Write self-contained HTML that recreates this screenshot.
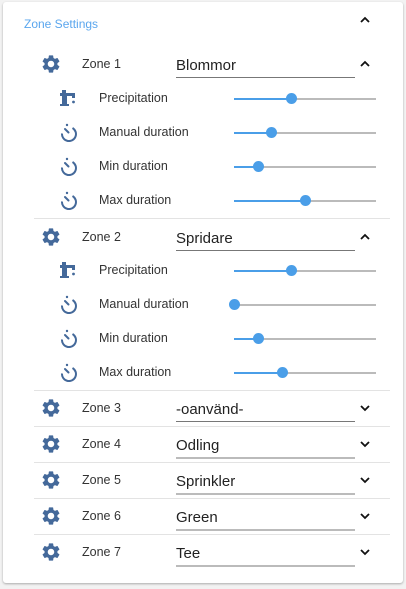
<!DOCTYPE html>
<html><head><style>
body{margin:0;width:406px;height:589px;background:#f2f2f2;font-family:"Liberation Sans",sans-serif;position:relative;overflow:hidden}
.card{position:absolute;left:3px;top:2px;width:400px;height:581px;background:#fff;border-radius:3px;box-shadow:0 1px 2px rgba(0,0,0,.3)}
.a{position:absolute}
.title{left:24px;top:17px;font-size:12px;color:#5aa6ee}
.zl{font-size:12.5px;color:#333}
.in{font-size:15px;color:#222;width:179px;height:20px;border-bottom:1px solid #777}
.in.g{border-bottom:2px solid #bbb}
.lab{font-size:12.5px;color:#333}
.track{height:2px;background:#bbb;width:142px;left:234px}
.fill{height:2px;background:#4a9ee8;left:0;top:0}
.th{width:11px;height:11px;border-radius:50%;background:#4a9ee8;top:-5px}
.div{left:34px;width:356px;height:1px;background:#e3e3e3}
</style></head><body>
<div class="card"></div>
<div class="a title">Zone Settings</div>
<svg class="a" style="left:359px;top:15px" width="12" height="10"><path d="M2 7 L6 3 L10 7" stroke="#111" stroke-width="1.8" fill="none"/></svg>
<svg width="0" height="0" style="position:absolute">
<defs>
<g id="gear"><path fill="#44699a" d="M19.14,12.94c.04-.3.06-.61.06-.94s-.02-.64-.07-.94l2.03-1.58c.18-.14.23-.41.12-.61l-1.92-3.320c-.12-.22-.37-.29-.59-.22l-2.39.96c-.5-.38-1.03-.7-1.62-.94L14.4,2.81c-.04-.24-.24-.41-.48-.41h-3.84c-.24,0-.43.17-.47.41L9.25,5.35C8.66,5.59,8.12,5.920,7.63,6.29L5.24,5.33c-.22-.08-.47,0-.59.22L2.74,8.87C2.62,9.08,2.66,9.34,2.86,9.48l2.03,1.58C4.84,11.36,4.8,11.69,4.8,12s.02.64.07.94l-2.03,1.58c-.18.14-.23.41-.12.61l1.92,3.32c.12.22.37.29.59.22l2.39-.96c.5.38,1.03.7,1.62.94l.36,2.54c.05.24.24.41.48.41h3.84c.24,0,.44-.17.47-.41l.36-2.54c.59-.24,1.13-.56,1.62-.94l2.39.96c.22.08.47,0,.59-.22l1.92-3.32c.12-.22.07-.47-.12-.61L19.14,12.94zM12,15.6c-1.98,0-3.6-1.62-3.6-3.6s1.62-3.6,3.6-3.6,3.6,1.62,3.6,3.6S13.98,15.6,12,15.6z"/></g>
<g id="tap"><path fill="#44699a" d="M5 3h4v3h9v5h-3V9H10v8h2v2H3v-2h2V9H3V6h2z"/><circle cx="16.5" cy="15" r="1.4" fill="#44699a"/></g>
<g id="tim" fill="none" stroke="#44699a" stroke-width="2"><path d="M15.5 7 A7 7 0 1 1 5 12.5"/><path d="M8 8 L11.5 11.5" stroke-linecap="round"/><circle cx="10" cy="4" r="1.2" fill="#44699a" stroke="none"/></g>
<g id="dn"><path d="M2 3 L6 7 L10 3" stroke="#111" stroke-width="1.8" fill="none"/></g>
<g id="up"><path d="M2 7 L6 3 L10 7" stroke="#111" stroke-width="1.8" fill="none"/></g>
</defs></svg>
<div id="z"></div>
<script>
var h='';
function zone(y,name,open,green){
 h+='<svg class="a" style="left:42px;top:'+(y-9)+'px" width="18" height="18" viewBox="2 2 20 20"><use href="#gear"/></svg>';
 h+='<div class="a zl" style="left:82px;top:'+(y-7)+'px">'+name[0]+'</div>';
 h+='<div class="a in'+(green?' g':'')+'" style="left:176px;top:'+(y-7)+'px">'+name[1]+'</div>';
 h+='<svg class="a" style="left:359px;top:'+(y-5)+'px" width="12" height="10"><use href="#'+(open?'up':'dn')+'"/></svg>';
}
function sub(y,icon,label,t){
 h+='<svg class="a" style="left:58px;top:'+(y-10)+'px" width="20" height="20" viewBox="1 1 20 20"><use href="#'+icon+'"/></svg>';
 h+='<div class="a lab" style="left:99px;top:'+(y-7)+'px">'+label+'</div>';
 h+='<div class="a track" style="top:'+y+'px"><div class="a fill" style="width:'+(t-234)+'px"></div><div class="a th" style="left:'+(t-234-5)+'px"></div></div>';
}
var labs=['Precipitation','Manual duration','Min duration','Max duration'],ic=['tap','tim','tim','tim'];
zone(64,['Zone 1','Blommor'],1,0);
[291,271,258,305].forEach(function(t,i){sub(98+34*i,ic[i],labs[i],t)});
h+='<div class="a div" style="top:218px"></div>';
zone(237,['Zone 2','Spridare'],1,0);
[291,234,258,282].forEach(function(t,i){sub(270+34*i,ic[i],labs[i],t)});
h+='<div class="a div" style="top:390px"></div>';
var z=[['Zone 3','-oanvänd-',0],['Zone 4','Odling',1],['Zone 5','Sprinkler',1],['Zone 6','Green',1],['Zone 7','Tee',1]];
z.forEach(function(a,i){var y=408+36*i;zone(y,a,0,a[2]);if(i<4)h+='<div class="a div" style="top:'+(y+18)+'px"></div>';});
document.getElementById('z').innerHTML=h;
</script>
</body></html>
